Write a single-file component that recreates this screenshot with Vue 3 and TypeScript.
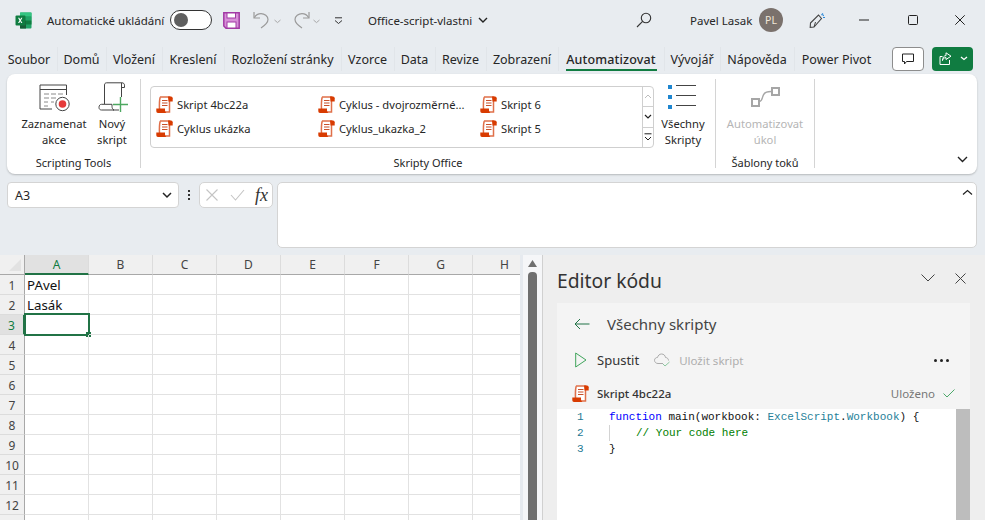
<script setup lang="ts">
const tabs = [
  { label: 'Soubor', w: 56 }, { label: 'Domů', w: 49 }, { label: 'Vložení', w: 56 },
  { label: 'Kreslení', w: 62 }, { label: 'Rozložení stránky', w: 117 }, { label: 'Vzorce', w: 53 },
  { label: 'Data', w: 41 }, { label: 'Revize', w: 51 }, { label: 'Zobrazení', w: 72 },
  { label: 'Automatizovat', w: 106 }, { label: 'Vývojář', w: 56 }, { label: 'Nápověda', w: 74 },
  { label: 'Power Pivot', w: 85 },
]
const scripts = ['Skript 4bc22a', 'Cyklus - dvojrozměrné...', 'Skript 6', 'Cyklus ukázka', 'Cyklus_ukazka_2', 'Skript 5']
const cols = ['A', 'B', 'C', 'D', 'E', 'F', 'G', 'H']
const rows = Array.from({ length: 13 }, (_, i) => i + 1)
const cell = (r: number, c: string) => (c === 'A' && r === 1 ? 'PAvel' : c === 'A' && r === 2 ? 'Lasák' : '')
</script>

<template>
  <div class="app">
    <svg class="defs" width="0" height="0" aria-hidden="true">
      <symbol id="scroll" viewBox="0 0 17 17">
        <path d="M4 1h9.500v15H6" fill="#fff" stroke="#e0704a" stroke-width="1.500" />
        <path d="M12 .5h3a1.700 1.700 0 0 1 1.700 1.700V5.500H12.500z" fill="#d83b01" />
        <path d="M4.300 1.200C3.300 3 3.300 11 3.500 13" fill="none" stroke="#e0704a" stroke-width="1.500" />
        <path d="M.3 12.600h8.700v1.400c0 1.400.6 2.200 1.500 3H2C.9 17 .3 16 .3 15z" fill="#d83b01" />
        <path d="M6 4.500h5.500M6 7h5.500M6 9.500h5.500" stroke="#c8502a" stroke-width="1.100" />
      </symbol>
    </svg>

    <header class="titlebar">
      <svg class="xl" width="17" height="17" viewBox="0 0 17 17">
        <rect x="5" y="0.5" width="11.500" height="16" rx="1" fill="#21a366" />
        <rect x="5" y="0.5" width="11.500" height="4" fill="#33c481" />
        <rect x="11" y="4.500" width="5.500" height="4" fill="#21a366" />
        <rect x="11" y="8.500" width="5.500" height="4" fill="#107c41" />
        <rect x="5" y="8.500" width="6" height="8" fill="#185c37" />
        <rect x="0.5" y="3.500" width="10" height="10" rx="1" fill="#107c41" />
        <path d="M3 5.800l1.500 2.600L3 11h1.300l.9-1.800.9 1.800h1.300L5.900 8.400l1.500-2.600H6.200L5.200 7.500l-.9-1.700z" fill="#fff" />
      </svg>
      <span class="autosave">Automatické ukládání</span>
      <span class="toggle"><i></i></span>
      <svg class="save" width="17" height="17" viewBox="0 0 17 17">
        <path d="M.8.800h15.400v15.400H3L.8 14z" fill="#d78fd8" stroke="#a23aa5" stroke-width="1.500" />
        <rect x="4" y="1" width="8.500" height="5" fill="#fff" stroke="#a23aa5" stroke-width="1" />
        <rect x="4" y="10" width="9" height="6" fill="#fff" stroke="#a23aa5" stroke-width="1" />
      </svg>
      <svg class="undo" width="17" height="18" viewBox="0 0 17 18" fill="none" stroke="#9a9a9a" stroke-width="1.200">
        <path d="M1 1v6h6" /><path d="M1.400 6.600C3 3.600 5.500 2.600 8 2.600c3.500 0 7 2.400 7 6 0 3-2.500 5.500-7 8.400" />
      </svg>
      <svg class="caret c1" width="7" height="5" viewBox="0 0 7 5"><path d="M.5 1l3 2.600 3-2.600" fill="none" stroke="#a8a8a8" /></svg>
      <svg class="redo" width="17" height="18" viewBox="0 0 17 18" fill="none" stroke="#9a9a9a" stroke-width="1.200">
        <path d="M16 1v6h-6" /><path d="M15.600 6.600C14 3.600 11.500 2.600 9 2.600c-3.500 0-7 2.400-7 6 0 3 2.500 5.500 7 8.400" />
      </svg>
      <svg class="caret c2" width="7" height="5" viewBox="0 0 7 5"><path d="M.5 1l3 2.600 3-2.600" fill="none" stroke="#a8a8a8" /></svg>
      <svg class="custom" width="9" height="8" viewBox="0 0 9 8" fill="none" stroke="#333"><path d="M1 .8h7" /><path d="M1 3.500l3.500 3 3.500-3" /></svg>
      <span class="filename">Office-script-vlastni</span>
      <svg class="fchev" width="10" height="7" viewBox="0 0 10 7"><path d="M1 1l4 4 4-4" fill="none" stroke="#222" stroke-width="1.400" /></svg>
      <svg class="search" width="16" height="16" viewBox="0 0 16 16" fill="none" stroke="#333" stroke-width="1.100">
        <circle cx="10" cy="6" r="4.700" /><path d="M6.600 9.400L1 15" />
      </svg>
      <span class="user">Pavel Lasak</span>
      <span class="avatar">PL</span>
      <svg class="feedback" width="17" height="17" viewBox="0 0 17 17" fill="none">
        <path d="M1.500 11l8-8 3 3.500-7.500 8.500-3.800.4z" stroke="#444" stroke-width="1.100" />
        <path d="M5 15l1.500-5" stroke="#444" />
        <path d="M12.500 3l1.500-1.500M14 5.500h2M13.800 3.800l1-.8" stroke="#2b88d8" stroke-width="1.100" />
      </svg>
      <svg class="win min" width="10" height="2" viewBox="0 0 10 2"><path d="M0 1h10" stroke="#222" /></svg>
      <svg class="win max" width="10" height="10" viewBox="0 0 10 10"><rect x=".5" y=".5" width="9" height="9" rx="1" fill="none" stroke="#222" /></svg>
      <svg class="win cls" width="10" height="10" viewBox="0 0 10 10"><path d="M.3.300l9.400 9.400M9.700.300L.3 9.700" stroke="#222" /></svg>
    </header>

    <nav class="tabs">
      <span
        v-for="t in tabs"
        :key="t.label"
        class="tab"
        :class="{ active: t.label === 'Automatizovat' }"
        :style="{ width: t.w + 'px' }"
      >{{ t.label }}</span>
      <button class="comment">
        <svg width="12" height="12" viewBox="0 0 12 12"><path d="M.5 1h11v7.500H4.500L2.500 11V8.500h-2z" fill="none" stroke="#222" /></svg>
      </button>
      <button class="share">
        <svg width="13" height="13" viewBox="0 0 13 13" fill="none" stroke="#fff"><path d="M3.500 4.500H1v8h9.500V8" /><path d="M7 .8L12 4.200 7 7.500V5.600c-2 0-3 1-3.500 3 0-3 1.500-5 3.500-5z" /></svg>
        <svg width="8" height="5" viewBox="0 0 8 5"><path d="M1 1l3 2.500L7 1" fill="none" stroke="#fff" stroke-width="1.300" /></svg>
      </button>
    </nav>

    <section class="ribbon">
      <div class="group g1">
        <div class="btns">
          <div class="rb record">
            <svg width="31" height="28" viewBox="0 0 31 28" fill="none">
              <path d="M27.500 11V1H1v24h12" stroke="#444" />
              <path d="M1 5.500h26.500" stroke="#444" />
              <path d="M5 10h5M12 10h5M19 10h5M5 14h5M12 14h5M5 18h4M12 18h3M5 22h4" stroke="#8a8a8a" />
              <circle cx="23.500" cy="20" r="6.700" fill="#fff" stroke="#444" />
              <circle cx="23.500" cy="20" r="3.800" fill="#e53a3a" />
            </svg>
            <span>Zaznamenat<br />akce</span>
          </div>
          <div class="rb novy">
            <svg width="31" height="30" viewBox="0 0 31 30" fill="none">
              <path d="M7.500 22V3c0-1.300.8-2.200 2-2.200H25c1.500 0 2.500 1 2.500 2.400v2.300h-3" stroke="#444" />
              <path d="M24.500 1v14" stroke="#444" />
              <path d="M2 25.500C2 23.500 3 22.300 4.500 22.300H15v2c0 2 .8 3.200 2 3.700H4.500C3 28 2 27 2 25.500z" fill="#fff" stroke="#444" />
              <path d="M16 28h6" stroke="#444" />
              <path d="M16 22.500h15M23.500 15v15" stroke="#4da860" stroke-width="1.400" />
            </svg>
            <span>Nový<br />skript</span>
          </div>
        </div>
        <div class="glabel">Scripting Tools</div>
      </div>
      <div class="sep"></div>
      <div class="group g2">
        <div class="btns">
          <div class="gallery">
            <div class="items">
              <div v-for="s in scripts" :key="s" class="item">
                <svg width="17" height="17"><use href="#scroll" /></svg>
                <span>{{ s }}</span>
              </div>
            </div>
            <div class="gscroll">
              <div class="gs"><svg width="8" height="5" viewBox="0 0 8 5"><path d="M1 4l3-3 3 3" fill="none" stroke="#bdbdbd" /></svg></div>
              <div class="gs"><svg width="8" height="5" viewBox="0 0 8 5"><path d="M1 1l3 3 3-3" fill="none" stroke="#222" stroke-width="1.200" /></svg></div>
              <div class="gs"><svg width="8" height="8" viewBox="0 0 8 8" fill="none" stroke="#222"><path d="M.5.800h7" /><path d="M1 4l3 3 3-3" /></svg></div>
            </div>
          </div>
          <div class="rb all">
            <svg width="30" height="26" viewBox="0 0 30 26">
              <rect x="0" y="0" width="4" height="4" fill="#1f86cf" />
              <rect x="0" y="10" width="4" height="4" fill="#1f86cf" />
              <rect x="0" y="20" width="4" height="4" fill="#1f86cf" />
              <path d="M8 .5h20M8 10.500h20M8 20.500h20" stroke="#444" stroke-width="1" />
            </svg>
            <span>Všechny<br />Skripty</span>
          </div>
        </div>
        <div class="glabel">Skripty Office</div>
      </div>
      <div class="sep"></div>
      <div class="group g3">
        <div class="btns">
          <div class="rb auto">
            <svg width="29" height="21" viewBox="0 0 29 21" fill="none" stroke="#a6a6a6" stroke-width="2">
              <rect x="1" y="12" width="7" height="7" /><rect x="21" y="1" width="7" height="7" />
              <path d="M8.500 14.500c3 0 2.500-5 4.500-7.500 1-1.500 3-2.500 7-2.500" stroke-width="1.400" />
            </svg>
            <span>Automatizovat<br />úkol</span>
          </div>
        </div>
        <div class="glabel">Šablony toků</div>
      </div>
      <div class="sep"></div>
      <svg class="collapse" width="11" height="7" viewBox="0 0 11 7"><path d="M1 1l4.500 4.500L10 1" fill="none" stroke="#222" stroke-width="1.400" /></svg>
    </section>

    <section class="fbar">
      <div class="namebox">
        <span>A3</span>
        <svg width="10" height="7" viewBox="0 0 10 7"><path d="M1 1l4 4 4-4" fill="none" stroke="#222" stroke-width="1.500" /></svg>
      </div>
      <div class="dots"><i></i><i></i><i></i></div>
      <div class="fx">
        <svg width="14" height="14" viewBox="0 0 14 14"><path d="M1.500 1.500l11 11M12.500 1.500l-11 11" stroke="#c4c4c4" stroke-width="1.100" /></svg>
        <svg width="15" height="12" viewBox="0 0 15 12"><path d="M1 6l4.500 5L14 1" fill="none" stroke="#c4c4c4" stroke-width="1.100" /></svg>
        <em>fx</em>
      </div>
      <div class="input">
        <svg width="11" height="7" viewBox="0 0 11 7"><path d="M1 5.500L5.500 1.500l4.500 4" fill="none" stroke="#222" stroke-width="1.200" /></svg>
      </div>
    </section>

    <main class="work">
      <div class="sheet">
        <div class="hrow">
          <div class="corner"><svg width="12" height="12" viewBox="0 0 12 12"><path d="M12 0v12H0z" fill="#e2e2e2" /></svg></div>
          <div v-for="c in cols" :key="c" class="chead" :class="{ sel: c === 'A' }">{{ c }}</div>
        </div>
        <div v-for="r in rows" :key="r" class="row">
          <div class="rhead" :class="{ sel: r === 3 }">{{ r < 13 ? r : '' }}</div>
          <div v-for="c in cols" :key="c" class="cell">
            {{ cell(r, c) }}
            <div v-if="r === 3 && c === 'A'" class="selbox"><b></b></div>
          </div>
        </div>
      </div>
      <div class="vscroll">
        <svg width="9" height="7" viewBox="0 0 9 7"><path d="M4.500 0L9 7H0z" fill="#6f6f6f" /></svg>
        <div class="thumb"></div>
      </div>
      <aside class="pane">
        <div class="phead">
          <h1>Editor kódu</h1>
          <svg class="pc" width="14" height="8" viewBox="0 0 14 8"><path d="M.5.500L7 7l6.500-6.500" fill="none" stroke="#444" /></svg>
          <svg class="px" width="11" height="11" viewBox="0 0 11 11"><path d="M.5.500l10 10M10.500.500l-10 10" stroke="#444" /></svg>
        </div>
        <div class="panel">
          <div class="back">
            <svg width="16" height="12" viewBox="0 0 16 12" fill="none" stroke="#217346"><path d="M15.500 6H1M6 1L1 6l5 5" /></svg>
            <span>Všechny skripty</span>
          </div>
          <div class="tools">
            <svg width="12" height="16" viewBox="0 0 12 16"><path d="M.7 1l10.300 7L.7 15z" fill="none" stroke="#3fa45b" /></svg>
            <span class="run">Spustit</span>
            <svg class="cloud" width="17" height="14" viewBox="0 0 17 14" fill="none">
              <path d="M9 10.500H4C2 10.500.5 9 .5 7.300S2 4.300 3.500 4.500C4 2.500 5.500 1 7.500 1c2.300 0 3.700 1.500 4 3.500 1.500 0 3 1.200 3 3" stroke="#aaa" />
              <path d="M9 11l2 2 4.500-4" stroke="#8cc79f" />
            </svg>
            <span class="savebtn">Uložit skript</span>
            <span class="more"><i></i><i></i><i></i></span>
          </div>
          <div class="sname">
            <svg width="17" height="17"><use href="#scroll" /></svg>
            <b>Skript 4bc22a</b>
            <span>Uloženo</span>
            <svg width="12" height="9" viewBox="0 0 12 9"><path d="M.5 4.500l3.500 3.500L11.500.5" fill="none" stroke="#4ca86a" /></svg>
          </div>
          <div class="code">
            <div class="lines">
              <div class="ln"><span class="no">1</span><span><span class="kw">function</span> main(workbook: <span class="ty">ExcelScript</span>.<span class="ty">Workbook</span>) {</span></div>
              <div class="ln"><span class="no">2</span><span class="guide"><span class="cm">// Your code here</span></span></div>
              <div class="ln"><span class="no">3</span><span>}</span></div>
            </div>
            <div class="cscroll"></div>
          </div>
        </div>
      </aside>
    </main>
  </div>
</template>

<style>
html, body { margin: 0; overflow: hidden; background: #e8ecf0; }
</style>

<style scoped>
.app { width: 985px; height: 520px; overflow: hidden; background: #e8ecf0; color: #262626; font: 12px "Noto Sans", "Open Sans", sans-serif; display: flex; flex-direction: column; }
.defs { position: absolute; }
.titlebar { height: 40px; display: flex; align-items: center; flex: none; font-size: 11.500px; }
.xl { margin-left: 15px; }
.autosave { margin-left: 15px; width: 116px; white-space: nowrap; }
.toggle { margin-left: 7px; height: 18px; border: 1px solid #333; border-radius: 10px; background: #fff; display: flex; align-items: center; padding-left: 3px; width: 37px; }
.toggle i { width: 14px; height: 14px; border-radius: 50%; background: #5f5f5f; }
.save { margin-left: 11px; }
.undo { margin-left: 13px; }
.caret { margin-top: 2px; }
.c1 { margin-left: 4px; }
.redo { margin-left: 12px; }
.c2 { margin-left: 3px; }
.custom { margin-left: 14px; margin-top: 2px; }
.filename { margin-left: 25px; width: 106px; white-space: nowrap; }
.fchev { margin-left: 4px; }
.search { margin-left: 148px; }
.user { margin-left: 38px; width: 60px; white-space: nowrap; }
.avatar { margin-left: 9px; width: 24px; height: 24px; border-radius: 50%; background: #7a716c; color: #f1e6d8; display: flex; align-items: center; justify-content: center; font-size: 10.500px; }
.feedback { margin-left: 26px; }
.min { margin-left: 33px; }
.max { margin-left: 39px; }
.cls { margin-left: 37px; }

.tabs { height: 34px; display: flex; align-items: center; padding-left: 1px; flex: none; font-size: 12.500px; }
.tab { box-sizing: border-box; text-align: center; height: 34px; line-height: 40px; white-space: nowrap; position: relative; flex: none; }
.tab + .tab::before { content: ""; position: absolute; left: 0; top: 7px; height: 24px; width: 1px; background: #e1e5e9; }
.tab.active { font-weight: 500; letter-spacing: .15px; }
.tab.active::after { content: ""; position: absolute; left: 8px; right: 7px; bottom: 3px; height: 2px; background: #107c41; }
.comment { margin-left: 13px; width: 32px; height: 24px; border: 1px solid #8d8d8d; border-radius: 4px; background: #fff; padding: 0; display: flex; align-items: center; justify-content: center; margin-top: 3px; }
.share { margin-left: 8px; width: 41px; height: 24px; border: 0; border-radius: 4px; background: #107c41; padding: 0 5px 0 7px; display: flex; align-items: center; justify-content: space-between; margin-top: 3px; }

.ribbon { margin: 0 8px 0 7px; height: 100px; flex: none; background: #fff; border-radius: 8px; box-shadow: 0 1px 2px rgba(0,0,0,.22); display: flex; padding-top: 5px; box-sizing: border-box; position: relative; font-size: 11.200px; }
.group { display: flex; flex-direction: column; height: 89px; }
.btns { flex: 1; display: flex; min-height: 0; }
.glabel { text-align: center; height: 16px; line-height: 21px; font-size: 11px; white-space: nowrap; }
.sep { width: 1px; height: 89px; background: #d4d4d4; flex: none; }
.rb { display: flex; flex-direction: column; align-items: center; text-align: center; line-height: 16px; white-space: nowrap; }
.rb svg { flex: none; }
.rb span { margin-top: auto; padding-bottom: 4px; }
.g1 { width: 133px; }
.record { width: 70px; margin-left: 12px; padding-top: 5px; }
.novy { width: 40px; margin-left: 3px; padding-top: 3px; }
.g2 { width: 574px; }
.gallery { margin: 7px 0 0 9px; width: 504px; height: 62px; box-sizing: border-box; border: 1px solid #cfcfcf; border-radius: 4px; display: flex; }
.items { flex: 1; display: grid; grid-template-columns: repeat(3, 162px); grid-auto-rows: 24px; padding: 5px 0 0 5px; }
.item { display: flex; align-items: center; gap: 4px; white-space: nowrap; }
.gscroll { width: 14px; border-left: 1px solid #cfcfcf; display: flex; flex-direction: column; }
.gs { flex: 1; display: flex; align-items: center; justify-content: center; }
.gs + .gs { border-top: 1px solid #cfcfcf; }
.all { width: 58px; padding-top: 6px; }
.g3 { width: 98px; }
.auto { width: 98px; color: #b5b5b5; padding-top: 8px; }
.collapse { position: absolute; right: 9px; bottom: 11px; }

.fbar { margin-top: 8px; height: 66px; flex: none; display: flex; align-items: flex-start; padding-left: 7px; font-size: 12.500px; }
.namebox { box-sizing: border-box; width: 172px; height: 26px; background: #fff; border: 1px solid #d4d4d4; border-radius: 4px; display: flex; align-items: center; justify-content: space-between; padding: 0 6px 0 7px; }
.dots { width: 20px; height: 26px; display: flex; flex-direction: column; align-items: center; justify-content: center; gap: 2px; }
.dots i { width: 2px; height: 2px; background: #333; }
.fx { box-sizing: border-box; width: 74px; height: 26px; background: #fff; border: 1px solid #d4d4d4; border-radius: 5px; display: flex; align-items: center; padding: 0 4px 0 5px; justify-content: space-between; }
.fx em { font: italic 18px "Liberation Serif", serif; color: #333; }
.input { box-sizing: border-box; margin-left: 4px; width: 700px; height: 66px; background: #fff; border: 1px solid #d4d4d4; border-radius: 5px; display: flex; justify-content: flex-end; padding: 6px 3px 0 0; align-items: flex-start; }

.work { margin-top: 7px; flex: 1; display: flex; min-height: 0; background: #fff; }
.sheet { width: 520px; flex: none; overflow: hidden; }
.hrow { display: flex; height: 20px; background: #f0f0f0; color: #444; }
.corner { width: 25px; flex: none; display: flex; align-items: flex-end; justify-content: flex-end; padding: 0 3px 3px 0; box-sizing: border-box; border-bottom: 1px solid #a8a8a8; border-right: 1px solid #a8a8a8; }
.chead { width: 64px; flex: none; box-sizing: border-box; border-right: 1px solid #dcdcdc; border-bottom: 1px solid #a8a8a8; text-align: center; line-height: 19px; font-size: 12px; }
.chead.sel { background: #e1e1e1; color: #107c41; border-bottom: 2px solid #217346; }
.row { display: flex; height: 20px; }
.rhead { width: 25px; flex: none; box-sizing: border-box; background: #f0f0f0; text-align: center; line-height: 21px; border-bottom: 1px solid #dcdcdc; color: #444; border-right: 1px solid #a8a8a8; font-size: 12px; }
.rhead.sel { background: #e1e1e1; color: #107c41; border-right: 2px solid #217346; }
.cell { width: 64px; flex: none; box-sizing: border-box; border-right: 1px solid #e2e2e2; border-bottom: 1px solid #e2e2e2; padding-left: 2px; line-height: 21px; font-size: 13.300px; color: #111; position: relative; }
.selbox { position: absolute; left: -1px; top: -2px; width: 66px; height: 23px; box-sizing: border-box; border: 2px solid #217346; }
.selbox b { position: absolute; right: -3px; bottom: -3px; width: 5px; height: 5px; background: #217346; }
.vscroll { width: 23px; flex: none; background: #f5f6f8; display: flex; flex-direction: column; align-items: center; padding-top: 5px; box-sizing: border-box; border-left: 3px solid #e6eaef; border-right: 1px solid #d0d0d0; }
.thumb { margin-top: 5px; width: 9px; flex: 1; background: #6f6f6f; border-radius: 4px 4px 0 0; }
.pane { flex: 1; background: #eeeeee; padding: 0 15px 0 14px; display: flex; flex-direction: column; min-width: 0; }
.phead { height: 48px; display: flex; align-items: center; flex: none; }
.phead h1 { margin: 4px 0 0; font-size: 19.300px; font-weight: 400; flex: 1; color: #333; line-height: 48px; }
.pc { margin-right: 20px; margin-top: -2px; }
.px { margin-right: 4px; margin-top: -2px; }
.panel { flex: 1; background: #f4f4f4; display: flex; flex-direction: column; min-height: 0; }
.back { height: 43px; box-sizing: border-box; padding: 0 0 2px 17px; display: flex; align-items: center; gap: 17px; font-size: 15px; color: #444; flex: none; }
.tools { height: 28px; display: flex; align-items: center; padding: 0 21px 0 18px; flex: none; font-size: 13px; }
.run { margin-left: 10px; color: #333; }
.cloud { margin-left: 15px; }
.savebtn { margin-left: 8px; color: #aeaeae; font-size: 11.500px; }
.more { margin-left: auto; display: flex; gap: 3px; }
.more i { width: 3px; height: 3px; border-radius: 50%; background: #222; }
.sname { height: 35px; box-sizing: border-box; padding: 3px 15px 0 15px; display: flex; align-items: center; flex: none; font-size: 11.500px; }
.sname b { font-weight: 500; margin-left: 8px; flex: 1; color: #333; }
.sname span { color: #777; margin-right: 8px; }
.code { flex: 1; background: #fff; display: flex; font: 11px/16px "Liberation Mono", monospace; min-height: 0; color: #111; }
.lines { flex: 1; }
.ln { display: flex; height: 16px; }
.no { width: 52px; padding-left: 20px; box-sizing: border-box; color: #237893; flex: none; }
.guide { padding-left: 26px; border-left: 1px solid #d3d3d3; }
.kw { color: #0000ff; }
.ty { color: #267f99; }
.cm { color: #008000; }
.cscroll { width: 14px; background: #bdbdbd; flex: none; }
</style>
